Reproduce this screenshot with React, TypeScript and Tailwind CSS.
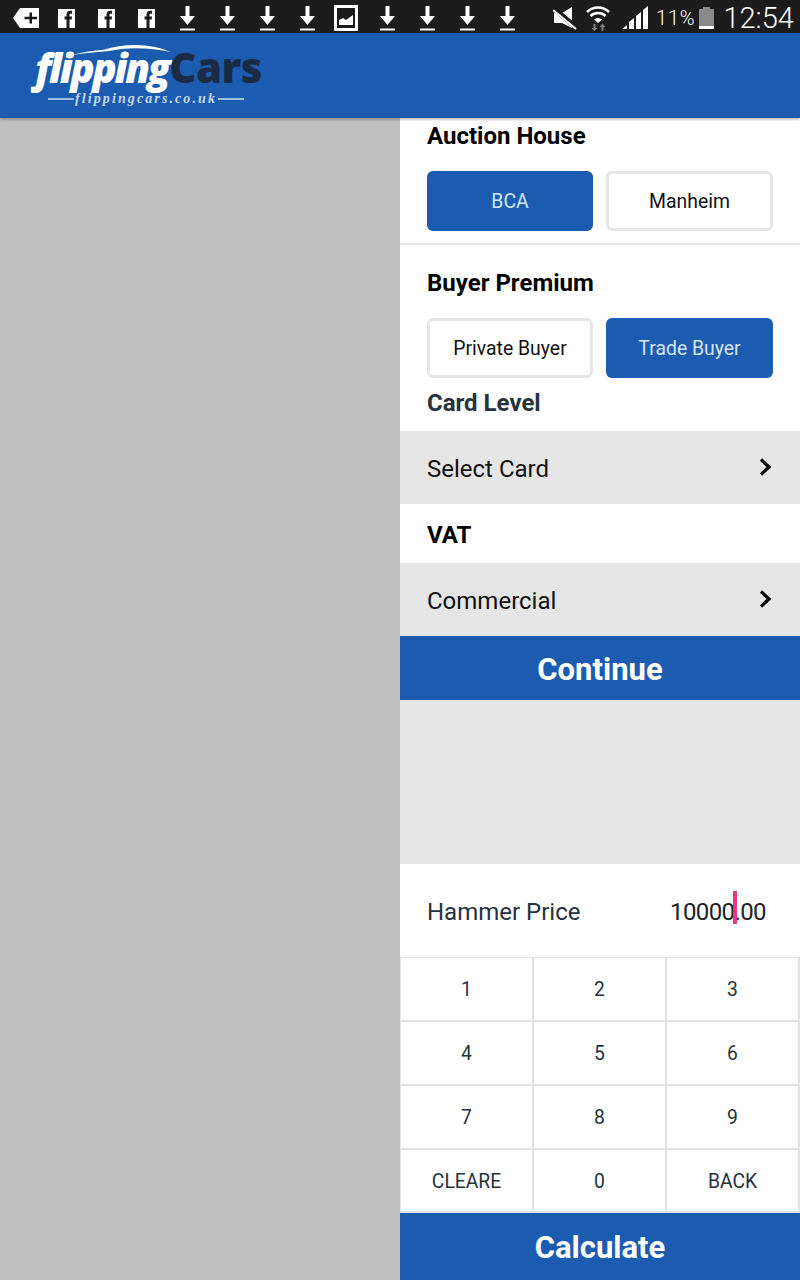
import React from "react";

const Dl = () => (
  <svg width="15" height="25" viewBox="0 0 15 25" fill="#fff" className="shrink-0">
    <path d="M5.500 0h4v10H15L7.500 19 0 10h5.500z" />
    <rect x="0" y="22.500" width="15" height="2" />
  </svg>
);
const Fb = () => (
  <svg width="17" height="19" viewBox="0 0 17 19" className="shrink-0">
    <rect width="17" height="19" fill="#fff" />
    <path d="M8.500 19V10.500H6.500V7.500h2V5.500C8.500 3 10 1.800 12 1.800h2v2.900h-1.300c-.9 0-1.200.4-1.200 1.200v1.600h2.500L13.600 10.500h-2.100V19z" fill="#1c1c1c" />
  </svg>
);

function StatusBar() {
  return (
    <div className="flex h-[33px] items-center bg-[#1c1c1c] pt-[3px] text-white">
      <div className="ml-[13px] mr-[19px] flex w-[26px]">
        <svg width="26" height="20" viewBox="0 0 26 20">
          <path d="M7 0h19v20H7L0 10z" fill="#fff" />
          <path d="M11.500 8.800h5V4.500h2.500v4.300h5v2.400h-5v4.300h-2.500v-4.300h-5z" fill="#1c1c1c" />
        </svg>
      </div>
      <div className="flex w-[97px] justify-between">
        <Fb /><Fb /><Fb />
      </div>
      <div className="ml-[25px] flex gap-[25px]">
        <Dl /><Dl /><Dl /><Dl />
      </div>
      <svg width="24" height="26" viewBox="0 0 24 26" className="ml-[19px] shrink-0">
        <rect x="1.500" y="1.500" width="21" height="23" fill="none" stroke="#fff" strokeWidth="3" />
        <path d="M5 20v-5l4-2 3 2 7-5v10z" fill="#fff" />
      </svg>
      <div className="ml-[22px] flex gap-[25px]">
        <Dl /><Dl /><Dl /><Dl />
      </div>
      <svg width="24" height="24" viewBox="0 0 24 24" className="ml-[38px] shrink-0">
        <path d="M1 7h8l10-6v21l-10-5H1z" fill="#fff" />
        <path d="M0 2l24 20" stroke="#1c1c1c" strokeWidth="5" />
        <path d="M0 4l23 19" stroke="#fff" strokeWidth="2" />
      </svg>
      <svg width="24" height="26" viewBox="0 0 24 26" className="ml-[9px] shrink-0">
        <path d="M1 7a16 16 0 0 1 22 0" fill="none" stroke="#fff" strokeWidth="2.500" />
        <path d="M4.500 11a11 11 0 0 1 15 0" fill="none" stroke="#fff" strokeWidth="2.500" />
        <path d="M8 14.500a6 6 0 0 1 8 0L12 18z" fill="#fff" />
        <path d="M7.500 19v4H5.500L8.500 26l3-3H9.500v-4zM15.500 26v-4h-2l3-3.500 3 3.500h-2v4z" fill="#808080" />
      </svg>
      <svg width="27" height="24" viewBox="0 0 27 24" className="ml-[12px] shrink-0">
        <path d="M0 23l5-4v4zM7 23v-7l5-4v11zM14 23V10l5-4v17zM21 23V4l5-4v23z" fill="#fff" />
      </svg>
      <span className="ml-[7px] font-['Roboto',sans-serif] text-[20px] leading-none font-light tracking-[0.8px]">11%</span>
      <svg width="15" height="22" viewBox="0 0 15 22" className="ml-[4px] shrink-0">
        <rect x="4" y="0" width="7" height="3" fill="#8a8a8a" />
        <rect x="0" y="2" width="15" height="17" fill="#8a8a8a" />
        <rect x="0" y="19" width="15" height="3" fill="#fff" />
      </svg>
      <span className="ml-[9px] font-['Roboto',sans-serif] text-[29px] leading-none font-light">12:54</span>
    </div>
  );
}

function Logo() {
  return (
    <div className="relative ml-[31px] h-[85px] w-[235px]">
      <svg width="103" height="11" viewBox="0 0 110 14" preserveAspectRatio="none" className="absolute left-[39px] top-[12px]">
        <path d="M0 13C14 9 26 7 36 6 46 2 58 0 70 0c14 0 28 4 38 9-12-3-24-5-38-5-10 0-20 1-30 4C26 9 12 11 0 13z" fill="#fff" />
      </svg>
      <div className="absolute left-[4px] top-[16px] flex items-baseline font-['Open_Sans',sans-serif] text-[40px] leading-[36px] font-extrabold text-white">
        <span className="italic tracking-[-2.300px]">flipping</span>
        <span className="ml-[1px] text-[42px] tracking-[-0.600px] text-[#1c2b45]">Cars</span>
      </div>
      <div className="absolute left-[17px] top-[57px] flex items-center gap-[1px]">
        <div className="h-[2px] w-[26px] bg-[#9fbfe3]" />
        <span className="font-['Liberation_Serif',serif] text-[14px] leading-[18px] font-bold tracking-[2.100px] text-[#c6d8ef] italic">flippingcars.co.uk</span>
        <div className="h-[2px] w-[26px] bg-[#9fbfe3]" />
      </div>
    </div>
  );
}

function Opt({ label, active }: { label: string; active?: boolean }) {
  return (
    <div
      className={
        active
          ? "flex h-[60px] items-center justify-center rounded-[6px] bg-[#1b5cb0] pt-[1px] text-[19.400px] text-[#d5e4f6]"
          : "flex h-[60px] items-center justify-center rounded-[6px] border-[3px] border-[#e6e6e6] bg-white pt-[1px] text-[19.400px] text-[#111]"
      }
    >
      {label}
    </div>
  );
}

function SelectRow({ label }: { label: string }) {
  return (
    <div className="flex h-[73px] items-center justify-between bg-[#e6e6e6] pt-[2px] pr-[26px] pl-[27px] text-[24px] text-[#111]">
      <span>{label}</span>
      <svg width="16" height="20" viewBox="0 0 16 20" className="-mt-[3px]">
        <path d="M3 2.500l8 7.500-8 7.500" fill="none" stroke="#000" strokeWidth="3.200" />
      </svg>
    </div>
  );
}

const keys = ["1", "2", "3", "4", "5", "6", "7", "8", "9", "CLEARE", "0", "BACK"];

export default function App() {
  return (
    <div className="flex h-[1280px] w-[800px] flex-col overflow-hidden bg-[#c0c0c0] font-['Roboto',sans-serif]">
      <StatusBar />
      <div className="z-10 h-[85px] shrink-0 bg-[#1b5cb0] shadow-[0_1px_3px_rgba(0,0,0,0.35)]">
        <Logo />
      </div>
      <div className="flex flex-1">
        <div className="w-[400px]" />
        <div className="flex w-[400px] flex-col bg-white">
          <div className="flex h-[127px] flex-col border-b-2 border-[#e6e6e6] px-[27px]">
            <div className="mt-[4px] h-[28px] text-[24px] leading-[28px] font-bold text-black">Auction House</div>
            <div className="mt-[21px] grid grid-cols-[166px_167px] gap-[13px]">
              <Opt label="BCA" active />
              <Opt label="Manheim" />
            </div>
          </div>
          <div className="px-[27px]">
            <div className="mt-[24px] h-[28px] text-[24px] leading-[28px] font-bold text-black">Buyer Premium</div>
            <div className="mt-[21px] grid grid-cols-[166px_167px] gap-[13px]">
              <Opt label="Private Buyer" />
              <Opt label="Trade Buyer" active />
            </div>
            <div className="mt-[11px] h-[28px] text-[24px] leading-[28px] font-bold text-[#26323d]">Card Level</div>
          </div>
          <div className="mt-[14px]">
            <SelectRow label="Select Card" />
          </div>
          <div className="flex h-[59px] items-center px-[27px] pt-[3px] text-[24px] font-bold text-black">VAT</div>
          <SelectRow label="Commercial" />
          <div className="flex h-[64px] items-center justify-center bg-[#1b5cb0] pt-[4px] text-[31px] font-bold text-white">Continue</div>
          <div className="h-[164px] bg-[#e6e6e6]" />
          <div className="flex h-[93px] items-center justify-between pt-[3px] pr-[34px] pl-[27px] text-[24px] text-[#26323d]">
            <span>Hammer Price</span>
            <span className="relative tracking-[-0.600px] text-[#222]">
              10000
              <span className="absolute top-[-3px] left-[63px] h-[33px] w-[4px] bg-[#e8387f]" />
              .00
            </span>
          </div>
          <div className="grid h-[256px] grid-cols-3 grid-rows-[64px_64px_64px_63px] border-t border-l border-[#e3e3e3]">
            {keys.map((k) => (
              <div key={k} className="flex items-center justify-center border-r-2 border-b-2 border-[#e3e3e3] pt-[3px] text-[19.300px] text-[#26323d]">
                {k}
              </div>
            ))}
          </div>
          <div className="flex flex-1 items-center justify-center bg-[#1b5cb0] pt-[3px] text-[31px] font-bold text-white">Calculate</div>
        </div>
      </div>
    </div>
  );
}
